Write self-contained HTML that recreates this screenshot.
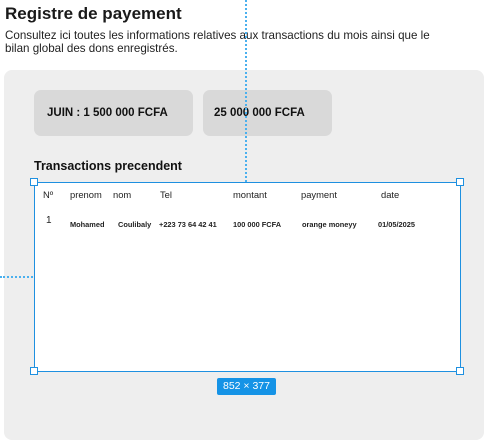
<!DOCTYPE html>
<html><head><meta charset="utf-8"><style>
*{margin:0;padding:0;box-sizing:border-box}
body{width:487px;height:444px;background:#fff;font-family:"Liberation Sans",sans-serif;position:relative;overflow:hidden;color:#111}
.a{position:absolute}
h1{position:absolute;left:5px;top:4px;font-size:17px;font-weight:bold;color:#1a1a1a}
.p{left:5px;top:29px;font-size:11.6px;line-height:13px;color:#222;width:448px}
.panel{left:4px;top:70px;width:480px;height:370px;background:#eee;border-radius:8px}
.box{background:#d9d9d9;border-radius:7px;font-weight:bold;font-size:11.5px;line-height:46px;color:#111}
.tbl{left:34px;top:182px;width:427px;height:190px;background:#fff;border:1.5px solid #1e90e0}
.h{position:absolute;top:6px;font-size:9.4px;color:#222}
.r{position:absolute;top:37px;font-size:7.4px;font-weight:bold;color:#222}
.hd{position:absolute;width:8px;height:8px;background:#fff;border:1.5px solid #1e90e0}
</style></head><body>
<h1>Registre de payement</h1>
<div class="a p">Consultez ici toutes les informations relatives aux transactions du mois ainsi que le bilan global des dons enregistrés.</div>
<div class="a panel"></div>
<div class="a box" style="left:34px;top:90px;width:159px;height:46px;padding-left:13px">JUIN : 1 500 000 FCFA</div>
<div class="a box" style="left:203px;top:90px;width:129px;height:46px;padding-left:11px">25 000 000 FCFA</div>
<div class="a" style="left:34px;top:159px;font-size:12.5px;font-weight:bold;color:#111">Transactions precendent</div>
<div class="a" style="left:245px;top:0;height:182px;border-left:2px dotted #4ab0ee"></div>
<div class="a" style="left:0;top:276px;width:33px;border-top:2px dotted #4ab0ee"></div>
<div class="a tbl">
<div class="h" style="left:8px">Nº</div>
<div class="h" style="left:35px">prenom</div>
<div class="h" style="left:78px">nom</div>
<div class="h" style="left:125px">Tel</div>
<div class="h" style="left:198px">montant</div>
<div class="h" style="left:266px">payment</div>
<div class="h" style="left:346px">date</div>
<div class="r" style="left:11px;top:32px;font-size:10px;font-weight:normal">1</div>
<div class="r" style="left:35px">Mohamed</div>
<div class="r" style="left:83px">Coulibaly</div>
<div class="r" style="left:124px">+223 73 64 42 41</div>
<div class="r" style="left:198px">100 000 FCFA</div>
<div class="r" style="left:267px">orange moneyy</div>
<div class="r" style="left:343px">01/05/2025</div>
</div>
<div class="hd" style="left:30px;top:178px"></div>
<div class="hd" style="left:456px;top:178px"></div>
<div class="hd" style="left:30px;top:367px"></div>
<div class="hd" style="left:456px;top:367px"></div>
<div class="a" style="left:217px;top:378px;width:59px;height:17px;background:#1593e6;border-radius:2px;color:#fff;font-family:'Liberation Sans',sans-serif;font-size:10.5px;line-height:17px;text-align:center">852 × 377</div>
</body></html>
